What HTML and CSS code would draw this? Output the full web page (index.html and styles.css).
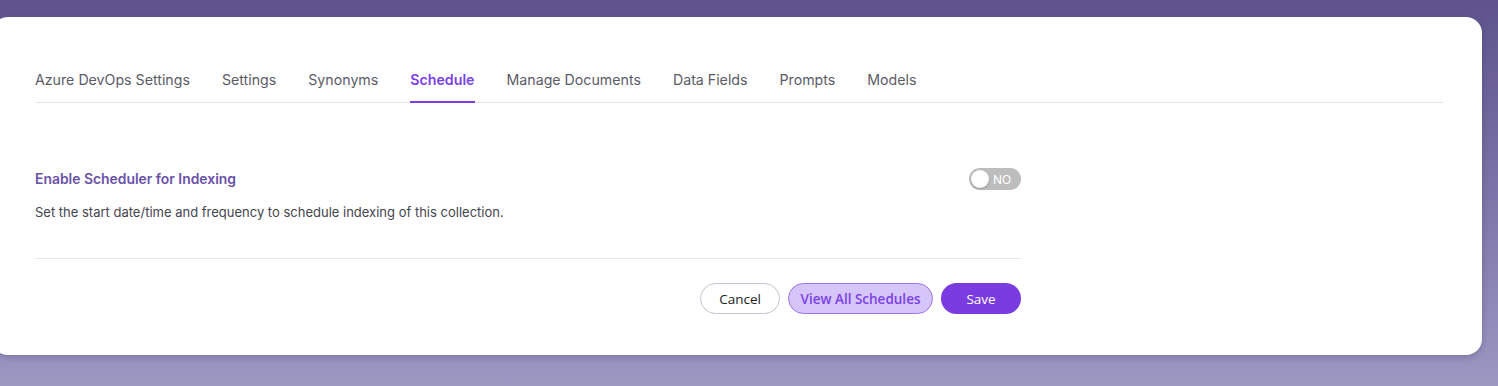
FILE: index.html
```html
<!DOCTYPE html>
<html>
<head>
    <title>Collection Schedule</title>
    <link rel="stylesheet" href="styles.css">
</head>
<body>
    <div class="card">
        <div class="tabs">
            <div class="tab">Azure DevOps Settings</div>
            <div class="tab">Settings</div>
            <div class="tab">Synonyms</div>
            <div class="tab active">Schedule</div>
            <div class="tab">Manage Documents</div>
            <div class="tab">Data Fields</div>
            <div class="tab">Prompts</div>
            <div class="tab">Models</div>
        </div>

        <div class="schedule-panel">
            <div class="setting-row">
                <div class="setting-title">Enable Scheduler for Indexing</div>
                <div class="toggle">
                    <div class="toggle-knob"></div>
                    <span class="toggle-label">NO</span>
                </div>
            </div>
            <div class="setting-desc">Set the start date/time and frequency to schedule indexing of this collection.</div>

            <div class="actions">
                <button class="btn btn-cancel">Cancel</button>
                <button class="btn btn-view">View All Schedules</button>
                <button class="btn btn-save">Save</button>
            </div>
        </div>
    </div>
</body>
</html>
```

FILE: styles.css
```css
html, body {
    height: 100%;
}

body {
    font-family: Inter, 'Noto Sans', sans-serif;
    margin: 0;
    padding-top: 17px;
    box-sizing: border-box;
    background: linear-gradient(180deg, #5e538c 0%, #7c74a8 50%, #9c98c2 100%);
    overflow: hidden;
}

.card {
    background: white;
    margin: 0 16px 0 -8px;
    padding: 53px 39px 41px 43px;
    border-radius: 16px;
    box-shadow: 0 2px 6px rgba(40, 30, 80, 0.25);
}

.tabs {
    display: flex;
    gap: 32px;
    border-bottom: 1px solid #e6e6ea;
}

.tab {
    font-size: 14.2px;
    line-height: 20px;
    color: #5b5b66;
    padding-bottom: 11px;
    border-bottom: 2px solid transparent;
    margin-bottom: -1px;
}

.tab.active {
    color: #7b3fe4;
    font-weight: 600;
    border-bottom-color: #7b3fe4;
}

.schedule-panel {
    width: 986px;
    padding-top: 65px;
}

.setting-row {
    display: flex;
    align-items: center;
    justify-content: space-between;
    height: 22px;
}

.setting-title {
    font-size: 13.9px;
    font-weight: 600;
    color: #6a52a8;
}

.toggle {
    width: 52px;
    height: 22px;
    border-radius: 11px;
    background: #bdbdbd;
    display: flex;
    align-items: center;
    box-sizing: border-box;
    padding-left: 2px;
    gap: 4px;
}

.toggle-knob {
    width: 18px;
    height: 18px;
    border-radius: 50%;
    background: white;
    box-shadow: 0 1px 2px rgba(0, 0, 0, 0.2);
}

.toggle-label {
    font-size: 12px;
    color: white;
}

.setting-desc {
    font-size: 13px;
    line-height: 18px;
    color: #45454d;
    margin-top: 13px;
    padding-bottom: 37px;
    border-bottom: 1px solid #e8e8ec;
}

.actions {
    display: flex;
    justify-content: flex-end;
    gap: 8px;
    margin-top: 24px;
}

.btn {
    font-family: 'Open Sans', 'Noto Sans', sans-serif;
    font-size: 13.5px;
    height: 31px;
    border-radius: 16px;
    cursor: pointer;
    box-sizing: border-box;
}

.btn-cancel {
    width: 80px;
    background: white;
    color: #222;
    border: 1px solid #c3c6d2;
}

.btn-view {
    width: 145px;
    background: #d5c5f8;
    color: #7b3fe4;
    font-weight: 600;
    border: 1px solid #9f73ea;
}

.btn-save {
    width: 80px;
    background: #7a3be0;
    color: white;
    font-weight: 500;
    border: none;
}
```
